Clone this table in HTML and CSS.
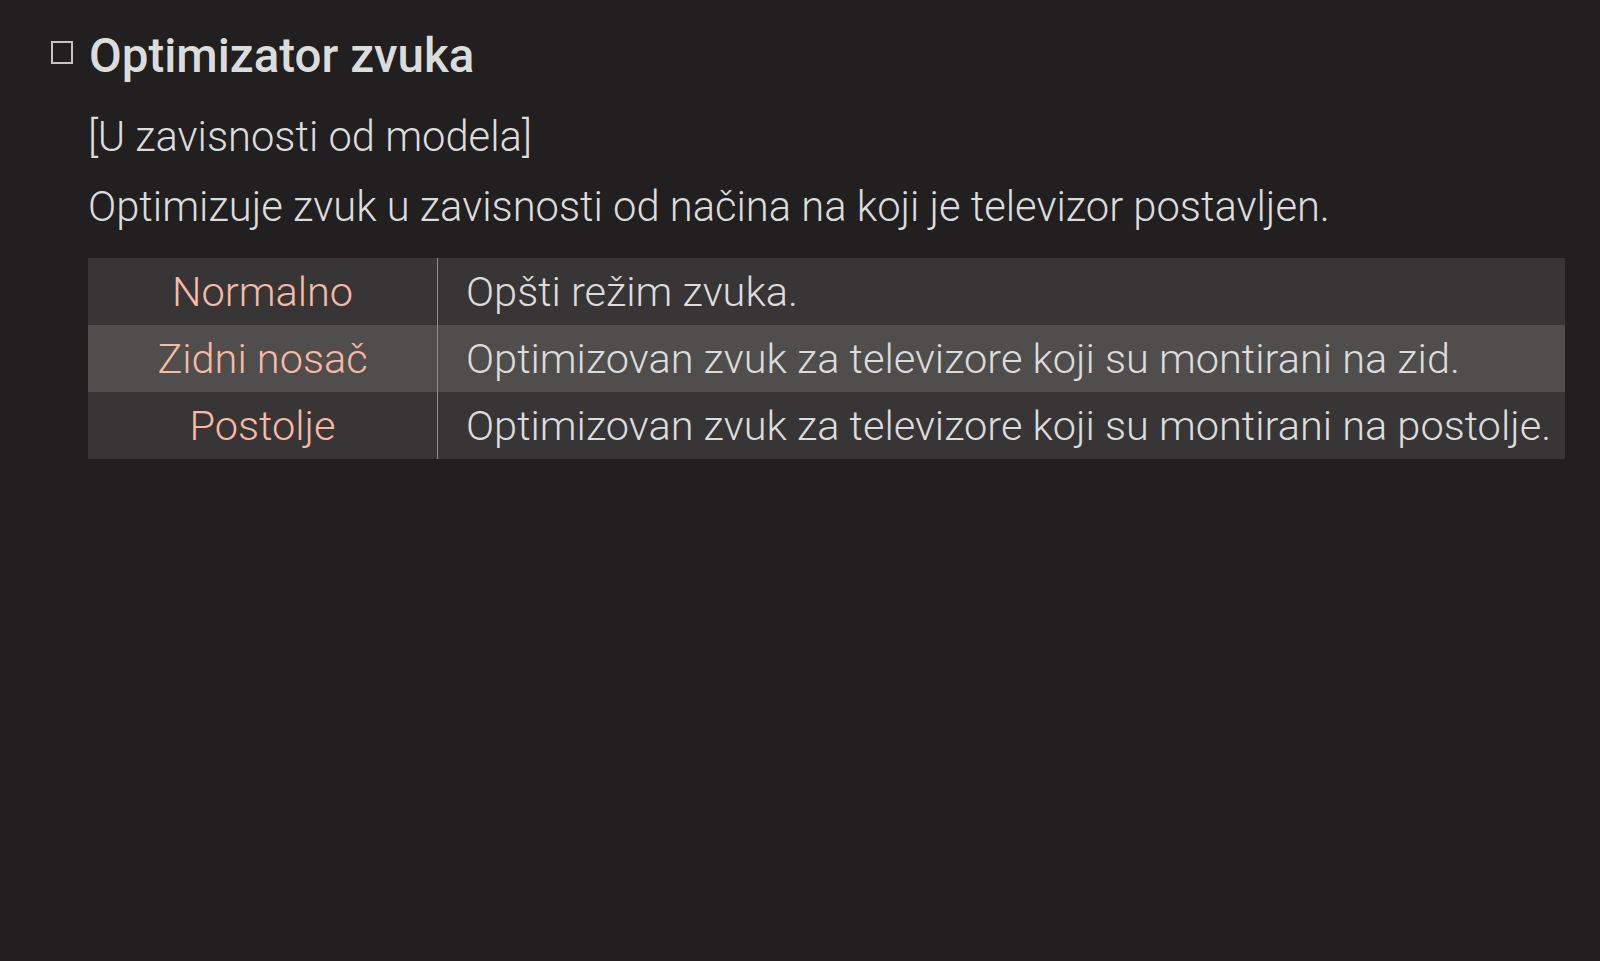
FILE: index.html
```html
<!DOCTYPE html>
<html lang="sr">
<head>
<meta charset="utf-8">
<title>Optimizator zvuka</title>
<link rel="stylesheet" href="styles.css">
</head>
<body>
<main class="page">
  <h1 class="title"><span class="box"></span><span>Optimizator zvuka</span></h1>
  <div class="content">
    <p class="note">[U zavisnosti od modela]</p>
    <p class="desc">Optimizuje zvuk u zavisnosti od načina na koji je televizor postavljen.</p>
    <table class="opts">
      <tr class="r1"><td class="name">Normalno</td><td class="text">Opšti režim zvuka.</td></tr>
      <tr class="r2"><td class="name">Zidni nosač</td><td class="text">Optimizovan zvuk za televizore koji su montirani na zid.</td></tr>
      <tr class="r1"><td class="name">Postolje</td><td class="text">Optimizovan zvuk za televizore koji su montirani na postolje.</td></tr>
    </table>
  </div>
</main>
</body>
</html>
```
FILE: styles.css
```css
html, body {
  margin: 0;
  padding: 0;
  background: #221f20;
}
body {
  width: 1600px;
  height: 961px;
  overflow: hidden;
  font-family: "Roboto", "Noto Sans", sans-serif;
  font-weight: 350;
  color: #dcdcdc;
}
.page {
  padding: 28px 35px 0 51px;
}
.title {
  display: flex;
  align-items: flex-start;
  gap: 16px;
  margin: 0;
  font-size: 47.5px;
  font-weight: 500;
  line-height: 56px;
  color: #dcdcdc;
}
.box {
  width: 18px;
  height: 19px;
  margin-top: 13px;
  border: 2px solid #c4c4c4;
  flex: none;
}
.content {
  padding-left: 37px;
}
.note, .desc {
  margin: 0;
  font-size: 41.7px;
  line-height: 70px;
}
.note { margin-top: 18px; }
.opts {
  border-collapse: collapse;
  width: 1477px;
  margin-top: 16px;
}
.opts td {
  padding: 0;
  font-size: 41.5px;
  line-height: 67px;
  vertical-align: middle;
}
.r1 { background: #383536; }
.r2 { background: #4f4e4c; }
.opts .name {
  width: 349px;
  text-align: center;
  color: #f9b9a3;
  border-right: 1px solid #8e8e8e;
}
.opts .text {
  padding-left: 28px;
  color: #dcdcdc;
}
```
